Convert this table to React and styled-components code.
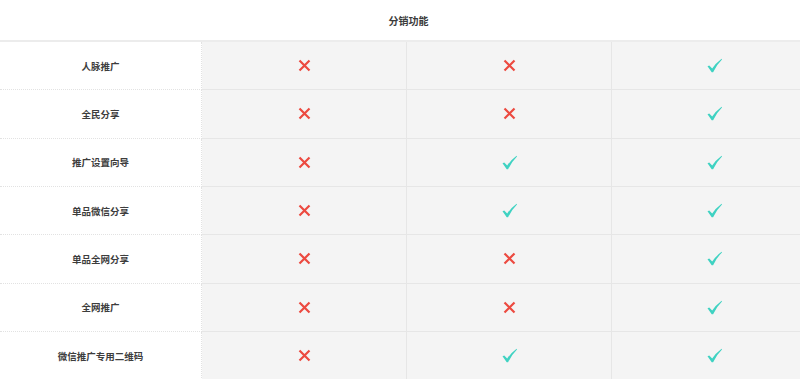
import React from "react";
import styled, { createGlobalStyle } from "styled-components";

const GlobalStyle = createGlobalStyle`
  html, body {
    margin: 0;
    padding: 0;
    background: #fff;
    overflow: hidden;
  }
  body {
    font-family: "Noto Sans CJK SC", "Noto Sans", sans-serif;
  }
`;

const features = [
  { name: "人脉推广", values: [false, false, true] },
  { name: "全民分享", values: [false, false, true] },
  { name: "推广设置向导", values: [false, true, true] },
  { name: "单品微信分享", values: [false, true, true] },
  { name: "单品全网分享", values: [false, false, true] },
  { name: "全网推广", values: [false, false, true] },
  { name: "微信推广专用二维码", values: [false, true, true] },
];

const Table = styled.div`
  width: 817px;
`;

const Header = styled.div`
  height: 42px;
  box-sizing: border-box;
  border-bottom: 2px solid #ececec;
  display: flex;
  align-items: center;
  justify-content: center;
  font-size: 10px;
  font-weight: 700;
  color: #3a3a3a;
`;

const Row = styled.div`
  display: grid;
  grid-template-columns: 202px 205px 205px 205px;
  height: 48.33px;
  box-sizing: border-box;
`;

const NameCell = styled.div`
  display: flex;
  align-items: center;
  justify-content: center;
  font-size: 9.5px;
  font-weight: 700;
  color: #3d3d3d;
  background: #fff;
  border-bottom: 1px dotted #e2e2e2;
  border-right: 1px dotted #e2e2e2;
  box-sizing: border-box;
`;

const ValueCell = styled.div`
  display: flex;
  align-items: center;
  justify-content: center;
  background: #f4f4f4;
  border-bottom: 1px solid #e6e6e6;
  border-right: 1px solid #e6e6e6;
  box-sizing: border-box;
`;

const Cross = () => (
  <svg width="13" height="13" viewBox="0 0 13 13">
    <path d="M1.5 1.5 L11.5 11.5 M11.5 1.5 L1.5 11.5" stroke="#ec4a40" strokeWidth="2.2" fill="none" />
  </svg>
);

const Check = () => (
  <svg width="17" height="17" viewBox="0 0 17 17">
    <path d="M1.5 9.2 L3.2 8.4 L6.2 11.6 Q9.5 6.4 15.6 1.8 L16 2.4 Q10.6 7.6 7.1 15.2 L5.7 15.2 Z" fill="#3fd2c2" />
  </svg>
);

export default function App() {
  return (
    <>
      <GlobalStyle />
      <Table>
        <Header>分销功能</Header>
        {features.map((f) => (
          <Row key={f.name}>
            <NameCell>{f.name}</NameCell>
            {f.values.map((v, i) => (
              <ValueCell key={i}>{v ? <Check /> : <Cross />}</ValueCell>
            ))}
          </Row>
        ))}
      </Table>
    </>
  );
}
